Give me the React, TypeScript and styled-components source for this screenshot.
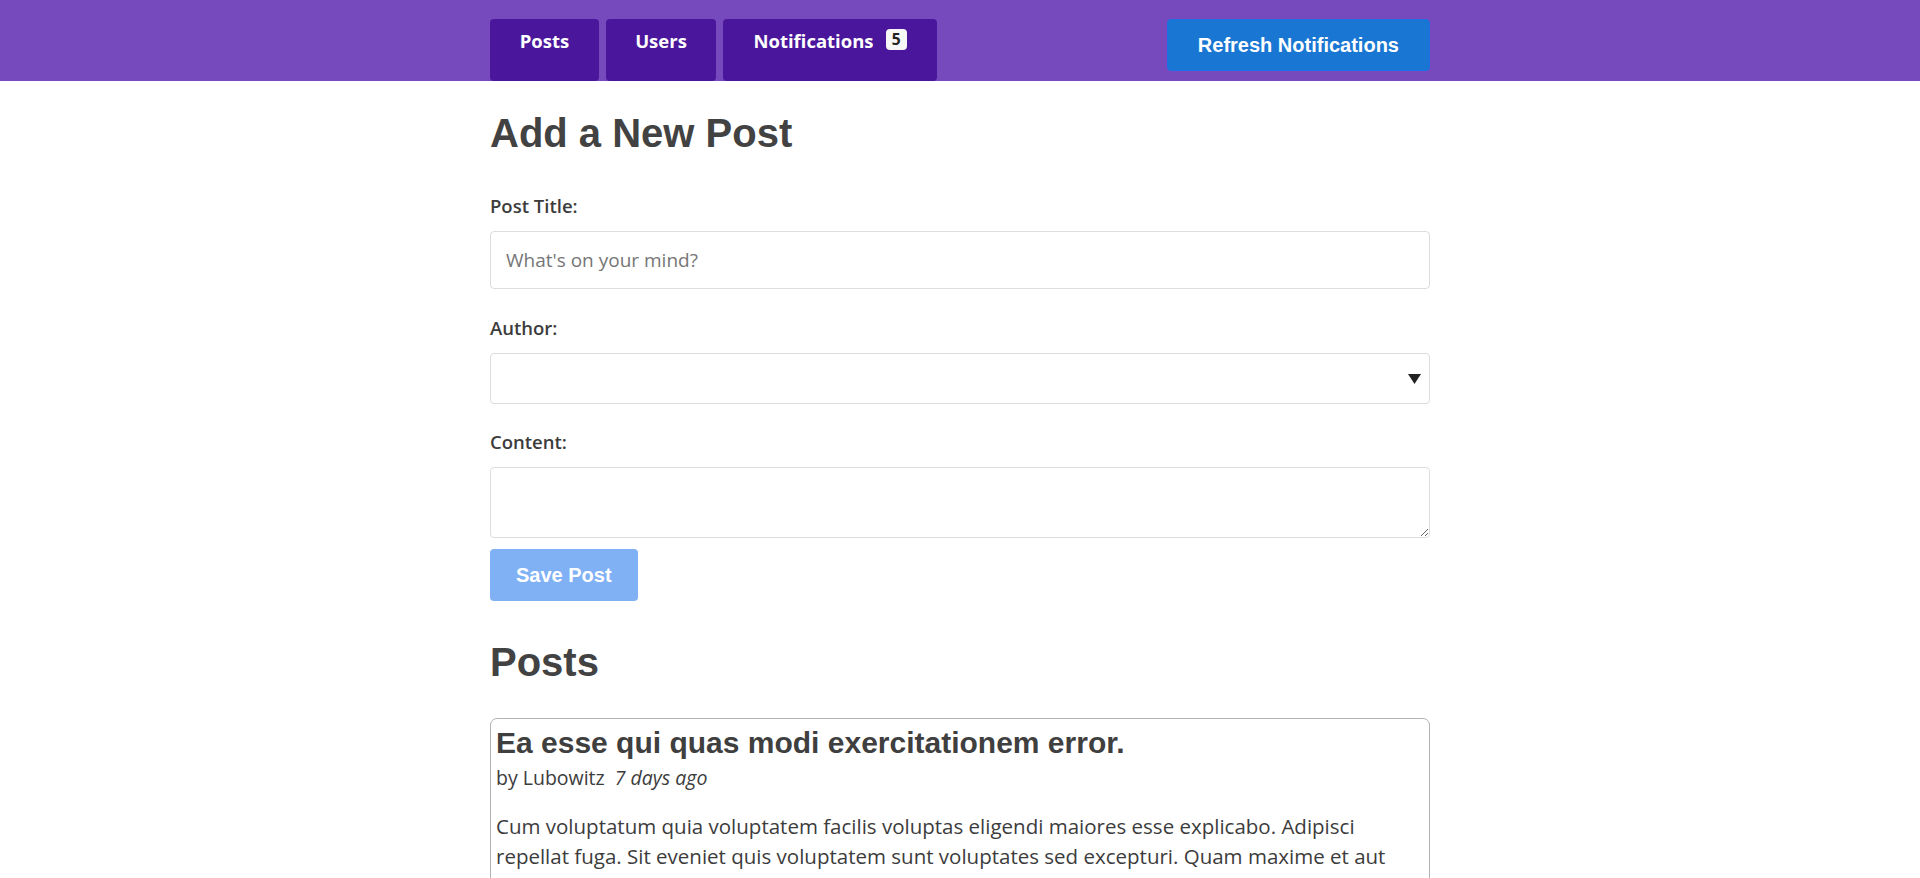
import React from "react";
import styled, { createGlobalStyle } from "styled-components";

const GlobalStyle = createGlobalStyle`
  html, body {
    margin: 0;
    padding: 0;
    background: #ffffff;
  }
  body {
    font-family: "Open Sans", "Noto Sans", sans-serif;
    color: #3c3c3c;
  }
  * { box-sizing: border-box; }
`;

const NavBar = styled.nav`
  background: #764abc;
`;

const NavInner = styled.div`
  width: 940px;
  margin: 0 auto;
  padding-top: 19px;
  height: 81px;
  display: flex;
  justify-content: space-between;
  align-items: flex-start;
`;

const NavLinks = styled.div`
  display: flex;
  gap: 7px;
  height: 62px;
`;

const NavLink = styled.a<{ $w: number }>`
  display: flex;
  align-items: flex-start;
  justify-content: center;
  width: ${(p) => p.$w}px;
  height: 62px;
  padding-top: 10px;
  background: #4a169b;
  border-radius: 4px;
  color: #ffffff;
  font-family: "Open Sans", sans-serif;
  font-weight: 700;
  font-size: 18.5px;
  line-height: 24px;
  text-decoration: none;
  cursor: pointer;
`;

const Badge = styled.span`
  display: inline-flex;
  align-items: center;
  justify-content: center;
  width: 21px;
  height: 21px;
  margin-left: 12px;
  background: #f7f7f7;
  color: #222222;
  border-radius: 4px;
  font-family: "Open Sans", sans-serif;
  font-weight: 700;
  font-size: 15.5px;
  line-height: 1;
`;

const BlueButton = styled.button<{ $disabledLook?: boolean }>`
  height: 52px;
  padding: 0 ${(p) => (p.$disabledLook ? 26 : 30)}px;
  background: ${(p) => (p.$disabledLook ? "#80b1f5" : "#1976d2")};
  border: ${(p) => (p.$disabledLook ? "none" : "1px solid #1f6fe6")};
  border-radius: 4px;
  color: #ffffff;
  font-family: "Liberation Sans", Arial, sans-serif;
  font-weight: 700;
  font-size: 20px;
  cursor: pointer;
`;

const Main = styled.main`
  width: 940px;
  margin: 0 auto;
`;

const Heading = styled.h2<{ $top: number }>`
  margin: ${(p) => p.$top}px 0 0;
  font-family: "Liberation Sans", Arial, sans-serif;
  font-weight: 700;
  font-size: 40px;
  line-height: 46px;
  color: #424242;
`;

const Form = styled.form`
  display: flex;
  flex-direction: column;
  align-items: stretch;
  margin-top: 38px;
`;

const Label = styled.label`
  display: block;
  font-weight: 600;
  font-size: 18.5px;
  line-height: 24px;
  color: #3c3c3c;
  margin-bottom: 13px;
`;

const TextInput = styled.input`
  height: 58px;
  padding: 0 15px;
  border: 1px solid #dddddd;
  border-radius: 4px;
  font-family: "Open Sans", sans-serif;
  font-size: 19px;
  color: #333;
  margin-bottom: 27px;
  &::placeholder { color: #767676; }
`;

const SelectWrap = styled.div`
  position: relative;
  margin-bottom: 26px;
`;

const Select = styled.select`
  width: 100%;
  height: 51px;
  padding: 0 15px;
  border: 1px solid #dddddd;
  border-radius: 4px;
  background: #ffffff;
  appearance: none;
  font-family: "Open Sans", sans-serif;
  font-size: 19px;
`;

const Arrow = styled.svg`
  position: absolute;
  right: 9px;
  top: 21px;
  pointer-events: none;
`;

const TextArea = styled.textarea`
  height: 71px;
  padding: 10px 15px;
  border: 1px solid #dddddd;
  border-radius: 4px;
  font-family: "Open Sans", sans-serif;
  font-size: 19px;
  margin-bottom: 11px;
  resize: vertical;
`;

const ButtonRow = styled.div`
  display: flex;
`;

const PostsList = styled.section`
  padding-bottom: 40px;
`;

const Card = styled.article`
  margin-top: 33px;
  padding: 7px 5px 10px;
  border: 1px solid #b3b3b3;
  border-radius: 7px;
`;

const PostTitle = styled.h3`
  margin: 0;
  font-family: "Liberation Sans", Arial, sans-serif;
  font-weight: 700;
  font-size: 30px;
  line-height: 34px;
  color: #3f3f3f;
`;

const Meta = styled.div`
  margin-top: 5px;
  font-size: 19.5px;
  line-height: 26px;
  color: #3c3c3c;
`;

const TimeAgo = styled.i`
  margin-left: 10px;
`;

const Content = styled.p`
  margin: 20px 0 0;
  font-size: 20.5px;
  line-height: 30px;
  color: #3c3c3c;
`;

export default function App() {
  return (
    <>
      <GlobalStyle />
      <NavBar>
        <NavInner>
          <NavLinks>
            <NavLink $w={109}>Posts</NavLink>
            <NavLink $w={110}>Users</NavLink>
            <NavLink $w={214}>
              Notifications<Badge>5</Badge>
            </NavLink>
          </NavLinks>
          <BlueButton>Refresh Notifications</BlueButton>
        </NavInner>
      </NavBar>
      <Main>
        <section>
          <Heading $top={29}>Add a New Post</Heading>
          <Form onSubmit={(e) => e.preventDefault()}>
            <Label htmlFor="postTitle">Post Title:</Label>
            <TextInput id="postTitle" type="text" placeholder="What's on your mind?" />
            <Label htmlFor="postAuthor">Author:</Label>
            <SelectWrap>
              <Select id="postAuthor" defaultValue="">
                <option value=""></option>
              </Select>
              <Arrow width="13" height="10" viewBox="0 0 13 10">
                <path d="M0 0 L13 0 L6.5 10 Z" fill="#222" />
              </Arrow>
            </SelectWrap>
            <Label htmlFor="postContent">Content:</Label>
            <TextArea id="postContent" />
            <ButtonRow>
              <BlueButton type="button" $disabledLook>
                Save Post
              </BlueButton>
            </ButtonRow>
          </Form>
        </section>
        <PostsList>
          <Heading $top={38}>Posts</Heading>
          <Card>
            <PostTitle>Ea esse qui quas modi exercitationem error.</PostTitle>
            <Meta>
              by Lubowitz<TimeAgo>7 days ago</TimeAgo>
            </Meta>
            <Content>
              Cum voluptatum quia voluptatem facilis voluptas eligendi maiores esse
              explicabo. Adipisci repellat fuga. Sit eveniet quis voluptatem sunt
              voluptates sed excepturi. Quam maxime et aut consequatur dolorem
              laudantium. Eos rerum et est ut sequi velit officiis.
            </Content>
          </Card>
        </PostsList>
      </Main>
    </>
  );
}
